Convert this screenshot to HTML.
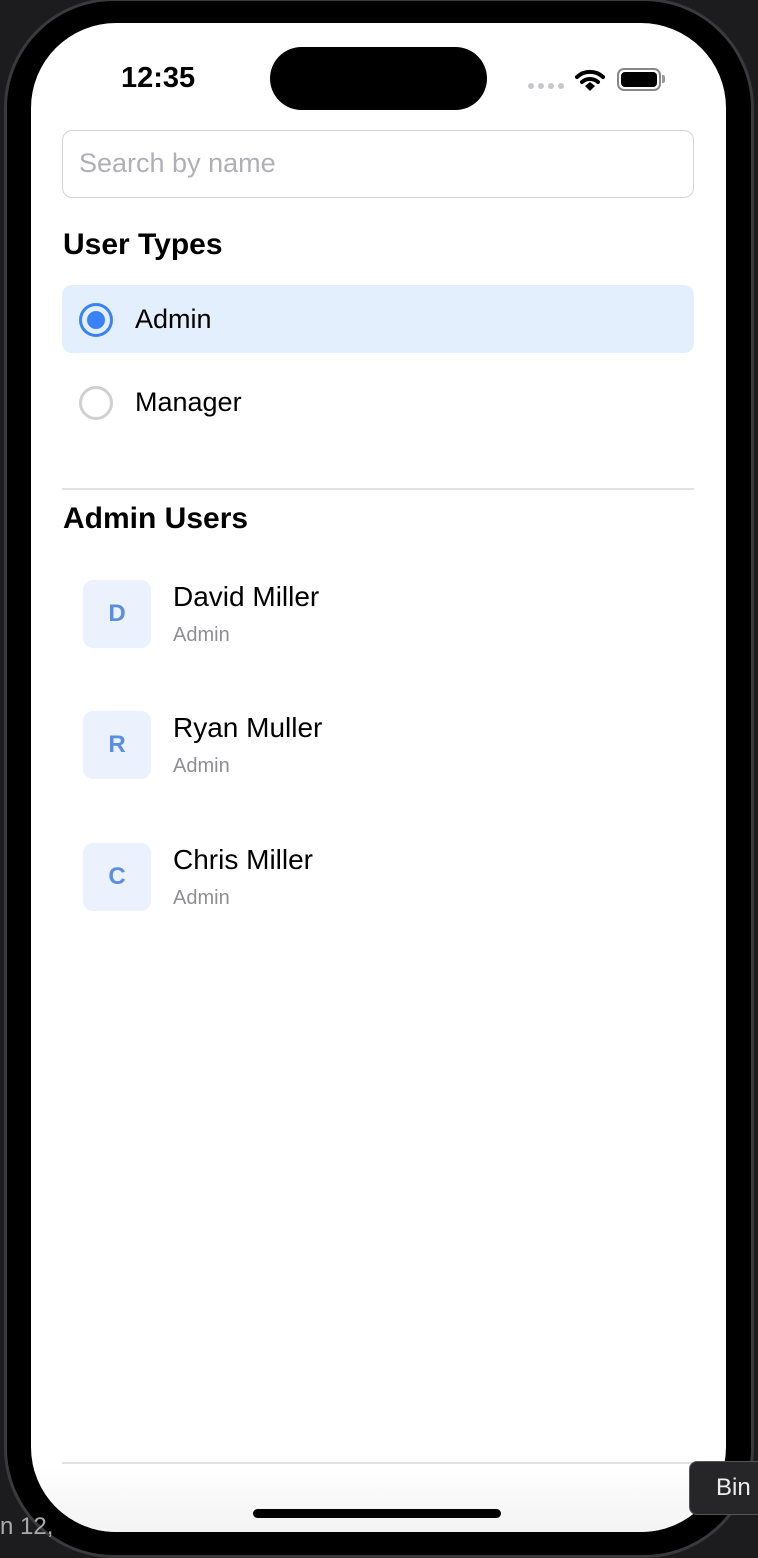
<!DOCTYPE html>
<html><head><meta charset="utf-8"><style>
*{margin:0;padding:0;box-sizing:border-box}
body{width:758px;height:1548px;background:#1c1c1e;position:relative;overflow:hidden;font-family:"Liberation Sans",sans-serif}
.frame{position:absolute;left:4px;top:-2px;width:750px;height:1560px;border-radius:110px;background:#000;border:3px solid #3a3a3c}
.screen{position:absolute;left:31px;top:23px;width:695px;height:1509px;border-radius:85px;background:#fff;overflow:hidden}
.abs{position:absolute}
.time{left:90px;top:39px;font-size:29px;font-weight:bold;color:#000}
.island{left:239px;top:24px;width:217px;height:63px;border-radius:32px;background:#000}
.search{left:31px;top:107px;width:632px;height:68px;border:1.5px solid #d4d4d6;border-radius:10px;font-size:27px;color:#b0b0b4;padding:17px 0 0 16px}
.h{font-size:30px;font-weight:bold;color:#000}
.sel{left:31px;top:262px;width:632px;height:68px;border-radius:10px;background:#e3effd}
.radio{width:34px;height:34px;border-radius:50%}
.lbl{font-size:27px;color:#000}
.av{width:68px;height:68px;border-radius:10px;background:#ebf2fd;color:#5b8de0;font-size:24px;font-weight:bold;text-align:center;line-height:68px}
.nm{font-size:28px;color:#000}
.rl{font-size:20px;color:#8e8e93}
.line{height:2px;background:#e2e2e4}
</style></head><body>
<div class="frame"></div>
<div class="screen">
<div class="abs time">12:35</div>
<div class="abs island"></div>
<div class="abs" style="left:497px;top:60px;display:flex;gap:4px"><i style="width:6px;height:6px;border-radius:50%;background:#c7c7cc;display:block"></i><i style="width:6px;height:6px;border-radius:50%;background:#c7c7cc;display:block"></i><i style="width:6px;height:6px;border-radius:50%;background:#c7c7cc;display:block"></i><i style="width:6px;height:6px;border-radius:50%;background:#c7c7cc;display:block"></i></div>
<svg class="abs" style="left:544px;top:45px" width="30" height="24" viewBox="0 0 30 24"><path d="M2 9a19 19 0 0 1 26 0" stroke="#000" stroke-width="4" fill="none" stroke-linecap="round"/><path d="M7 14a12 12 0 0 1 16 0" stroke="#000" stroke-width="4" fill="none" stroke-linecap="round"/><path d="M10 18l5-4 5 4-5 5z" fill="#000"/></svg>
<div class="abs" style="left:586px;top:45px;width:44px;height:23px;border:2px solid #888;border-radius:7px;padding:2px"><div style="width:100%;height:100%;background:#000;border-radius:4px"></div></div>
<div class="abs" style="left:631px;top:52px;width:3px;height:8px;background:#999;border-radius:0 2px 2px 0"></div>
<div class="abs search">Search by name</div>
<div class="abs h" style="left:32px;top:205px">User Types</div>
<div class="abs sel"></div>
<div class="abs radio" style="left:48px;top:280px;border:3.5px solid #3a82f7;padding:5px"><div style="width:100%;height:100%;border-radius:50%;background:#3a82f7"></div></div>
<div class="abs lbl" style="left:104px;top:281px">Admin</div>
<div class="abs radio" style="left:48px;top:363px;border:3px solid #d0d0d2"></div>
<div class="abs lbl" style="left:104px;top:364px">Manager</div>
<div class="abs line" style="left:31px;top:465px;width:632px"></div>
<div class="abs h" style="left:32px;top:479px">Admin Users</div>
<div class="abs av" style="left:52px;top:557px">D</div>
<div class="abs nm" style="left:142px;top:558px">David Miller</div>
<div class="abs rl" style="left:142px;top:601px">Admin</div>
<div class="abs av" style="left:52px;top:688px">R</div>
<div class="abs nm" style="left:142px;top:689px">Ryan Muller</div>
<div class="abs rl" style="left:142px;top:732px">Admin</div>
<div class="abs av" style="left:52px;top:820px">C</div>
<div class="abs nm" style="left:142px;top:821px">Chris Miller</div>
<div class="abs rl" style="left:142px;top:864px">Admin</div>
<div class="abs line" style="left:31px;top:1439px;width:664px;height:1.5px"></div>
<div class="abs" style="left:0;top:1441px;width:695px;height:70px;background:linear-gradient(#fff,#f3f3f3)"></div>
<div class="abs" style="left:222px;top:1486px;width:248px;height:9px;border-radius:5px;background:#000"></div>
</div>
<div class="abs" style="left:689px;top:1461px;width:80px;height:54px;background:#262628;border:1.5px solid #555;border-radius:8px;color:#eee;font-size:24px;padding:12px 0 0 26px">Bin</div>
<div class="abs" style="left:0;top:1513px;color:#aaa;font-size:24px">n 12,</div>
</body></html>
